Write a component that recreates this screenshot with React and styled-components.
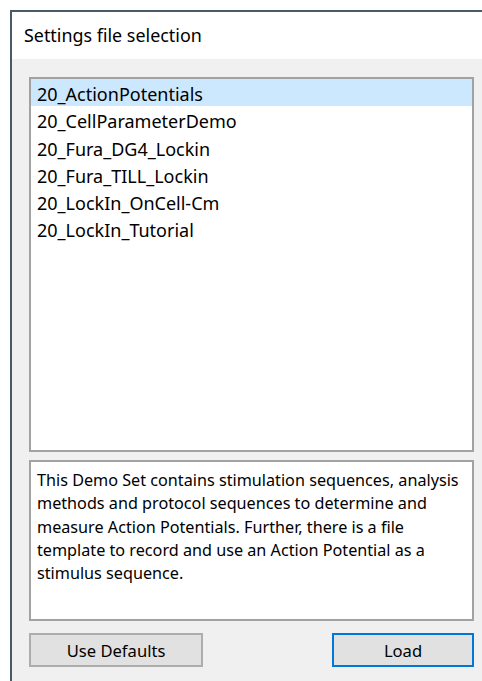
import React, { useState } from "react";
import styled, { createGlobalStyle } from "styled-components";

const GlobalStyle = createGlobalStyle`
  html, body {
    margin: 0;
    padding: 0;
    background: #ffffff;
  }
  body {
    font-family: "Noto Sans", "Open Sans", "Liberation Sans", sans-serif;
    color: #000000;
  }
`;

const Window = styled.div`
  margin: 10px 0 0 10px;
  height: 671px;
  box-sizing: border-box;
  border-left: 2px solid #4b5a68;
  border-top: 2px solid #4b5a68;
  display: flex;
  flex-direction: column;
`;

const TitleBar = styled.div`
  height: 47px;
  background: #ffffff;
  display: flex;
  align-items: center;
  padding-left: 12px;
  padding-bottom: 1px;
  box-sizing: border-box;
  font-size: 17.9px;
  color: #000000;
`;

const Body = styled.div`
  flex: 1;
  background: #f0f0f0;
  padding: 18px 8px 0 17px;
  display: flex;
  flex-direction: column;
`;

const ListBox = styled.ul`
  list-style: none;
  margin: 0;
  height: 375px;
  box-sizing: border-box;
  padding: 0;
  background: #ffffff;
  border: 2px solid #a2a2a2;
`;

const ListItem = styled.li`
  height: 27.3px;
  line-height: 30px;
  padding-left: 6px;
  font-size: 18px;
  white-space: nowrap;
  background: ${(p) => (p.$selected ? "#cce8ff" : "transparent")};
  cursor: default;
`;

const Description = styled.div`
  margin-top: 8px;
  height: 161px;
  box-sizing: border-box;
  background: #ffffff;
  border: 2px solid #a2a2a2;
  padding: 7px 6px;
  font-size: 16.2px;
  line-height: 23.3px;
`;

const ButtonRow = styled.div`
  margin-top: 12px;
  display: flex;
  justify-content: space-between;
`;

const Button = styled.button`
  width: ${(p) => (p.$wide ? "174px" : "142px")};
  height: 34px;
  box-sizing: border-box;
  background: #e1e1e1;
  border: 2px solid ${(p) => (p.$primary ? "#0078d7" : "#adadad")};
  font-family: inherit;
  font-size: 16.6px;
  color: #000000;
  padding: 0;
`;

const files = [
  "20_ActionPotentials",
  "20_CellParameterDemo",
  "20_Fura_DG4_Lockin",
  "20_Fura_TILL_Lockin",
  "20_LockIn_OnCell-Cm",
  "20_LockIn_Tutorial",
];

export default function App() {
  const [selected, setSelected] = useState(0);

  return (
    <>
      <GlobalStyle />
      <Window>
        <TitleBar>Settings file selection</TitleBar>
        <Body>
          <ListBox>
            {files.map((name, i) => (
              <ListItem
                key={name}
                $selected={i === selected}
                onClick={() => setSelected(i)}
              >
                {name}
              </ListItem>
            ))}
          </ListBox>
          <Description>
            This Demo Set contains stimulation sequences, analysis methods and
            protocol sequences to determine and measure Action Potentials.
            Further, there is a file template to record and use an Action
            Potential as a stimulus sequence.
          </Description>
          <ButtonRow>
            <Button $wide>Use Defaults</Button>
            <Button $primary>Load</Button>
          </ButtonRow>
        </Body>
      </Window>
    </>
  );
}
